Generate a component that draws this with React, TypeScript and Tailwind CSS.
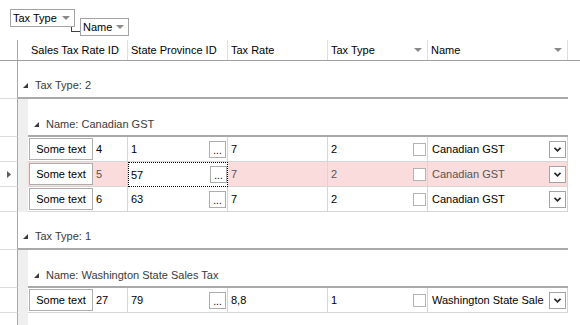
import type { ReactNode } from "react";

type Row = {
  id: string;
  province: string;
  rate: string;
  type: string;
  name: string;
  current?: boolean;
};

type Group = {
  taxType: string;
  name: string;
  rows: Row[];
};

const groups: Group[] = [
  {
    taxType: "2",
    name: "Canadian GST",
    rows: [
      { id: "4", province: "1", rate: "7", type: "2", name: "Canadian GST" },
      { id: "5", province: "57", rate: "7", type: "2", name: "Canadian GST", current: true },
      { id: "6", province: "63", rate: "7", type: "2", name: "Canadian GST" },
    ],
  },
  {
    taxType: "1",
    name: "Washington State Sales Tax",
    rows: [{ id: "27", province: "79", rate: "8,8", type: "1", name: "Washington State Sale" }],
  },
];

function FilterArrow() {
  return (
    <svg width="8" height="4" viewBox="0 0 8 4" className="shrink-0">
      <polygon points="0,0 8,0 4,4" fill="#8a8a8a" />
    </svg>
  );
}

function ExpandGlyph() {
  return (
    <svg width="5" height="5" viewBox="0 0 5 5" className="shrink-0">
      <polygon points="5,0 5,5 0,5" fill="#3a3a3a" />
    </svg>
  );
}

function GroupChip({ children, width }: { children: ReactNode; width: string }) {
  return (
    <div
      className={`flex h-[18px] items-center border border-[#a3a3a3] bg-white pl-[2px] pr-[4px] text-black ${width}`}
    >
      <span className="flex-1">{children}</span>
      <FilterArrow />
    </div>
  );
}

function Indicator({ children }: { children?: ReactNode }) {
  return (
    <div className="flex w-[18px] shrink-0 items-center justify-center border-r border-b border-r-[#a8a8a8] border-b-[#dcdcdc]">
      {children}
    </div>
  );
}

function Strip() {
  return <div className="w-[10px] shrink-0 bg-[#efefef]" />;
}

function DataRow({ row }: { row: Row }) {
  const bg = row.current ? "bg-[#fadcdc]" : "bg-white";
  const txt = row.current ? "text-[#555]" : "text-black";
  const cell = `flex h-full items-center border-r border-b border-[#d6d6d6] ${txt}`;
  return (
    <div className="flex h-[25px]">
      <Indicator>
        {row.current ? (
          <svg width="4" height="7" viewBox="0 0 4 7">
            <polygon points="0,0 4,3.5 0,7" fill="#5a5a5a" />
          </svg>
        ) : null}
      </Indicator>
      <Strip />
      <div className={`flex ${bg}`}>
        <div className={`${cell} w-[100px] pl-[1px]`}>
          <div className="flex h-[22px] w-[64px] items-center justify-center border border-[#adadad] bg-white text-black">
            Some text
          </div>
          <span className="ml-[3px]">{row.id}</span>
        </div>
        {row.current ? (
          <div className="flex h-full w-[100px] items-center border border-dotted border-black bg-white pl-[2px] text-black">
            <span className="flex-1">{row.province}</span>
            <div className="flex h-[17px] w-[17px] items-end justify-center border border-[#adadad] bg-white pb-[1px] text-[10px] leading-none text-black">
              ...
            </div>
          </div>
        ) : (
          <div className={`${cell} w-[100px] pl-[3px] pr-[1px]`}>
            <span className="flex-1">{row.province}</span>
            <div className="flex h-[17px] w-[17px] items-end justify-center border border-[#adadad] bg-white pb-[1px] text-[10px] leading-none text-black">
              ...
            </div>
          </div>
        )}
        <div className={`${cell} w-[100px] pl-[3px]`}>{row.rate}</div>
        <div className={`${cell} w-[100px] pl-[3px] pr-[1px]`}>
          <span className="flex-1">{row.type}</span>
          <div className="h-[13px] w-[13px] border border-[#b4b4b4] bg-white" />
        </div>
        <div className={`${cell} w-[140px] pl-[4px] pr-[1px]`}>
          <span className="flex-1 overflow-hidden whitespace-nowrap">{row.name}</span>
          <div className="flex h-[17px] w-[17px] items-center justify-center border border-[#a3a3a3] bg-white">
            <svg width="7" height="5" viewBox="0 0 7 5">
              <polyline points="0.5,0.8 3.5,3.8 6.5,0.8" fill="none" stroke="#222" strokeWidth="1.6" />
            </svg>
          </div>
        </div>
      </div>
    </div>
  );
}

function GroupBlock({ group }: { group: Group }) {
  return (
    <>
      <div className="flex h-[38px]">
        <Indicator />
        <div className="flex w-[550px] items-end border-b-2 border-[#a9a9a9] pb-[5px] pl-[5px] text-[#3a3a3a]">
          <div className="mb-[4px]">
            <ExpandGlyph />
          </div>
          <span className="ml-[7px]">Tax Type: {group.taxType}</span>
        </div>
      </div>
      <div className="flex h-[38px]">
        <Indicator />
        <Strip />
        <div className="flex w-[540px] items-end border-b-2 border-[#a9a9a9] pb-[4px] pl-[6px] text-[#3a3a3a]">
          <div className="mb-[4px]">
            <ExpandGlyph />
          </div>
          <span className="ml-[7px]">Name: {group.name}</span>
        </div>
      </div>
      {group.rows.map((r) => (
        <DataRow key={r.id} row={r} />
      ))}
    </>
  );
}

export default function App() {
  return (
    <div
      className="flex h-[325px] w-[580px] flex-col overflow-hidden bg-white text-[11px] leading-[14px] text-black"
      style={{ fontFamily: '"Liberation Sans", Arial, sans-serif' }}
    >
      {/* group-by panel */}
      <div className="flex h-[40px] shrink-0 items-start pl-[10px] pt-[9px]">
        <GroupChip width="w-[65px]">Tax Type</GroupChip>
        <div className="relative ml-[5px] mt-[9px]">
          <div className="absolute left-[-9px] top-[9px] h-[5px] w-[9px] border-b border-l border-[#404040]" />
          <GroupChip width="w-[49px]">Name</GroupChip>
        </div>
      </div>

      {/* header */}
      <div className="flex h-[21px] shrink-0 border-b border-[#a0a0a0]">
        <div className="w-[18px] shrink-0 border-r border-[#a8a8a8]" />
        <div className="flex w-[110px] items-center border-r border-[#dedede] pl-[13px]">Sales Tax Rate ID</div>
        <div className="flex w-[100px] items-center border-r border-[#dedede] pl-[3px]">State Province ID</div>
        <div className="flex w-[100px] items-center border-r border-[#dedede] pl-[3px]">Tax Rate</div>
        <div className="flex w-[100px] items-center border-r border-[#dedede] pl-[3px] pr-[5px]">
          <span className="flex-1">Tax Type</span>
          <FilterArrow />
        </div>
        <div className="flex w-[140px] items-center border-r border-[#dedede] pl-[3px] pr-[5px]">
          <span className="flex-1">Name</span>
          <FilterArrow />
        </div>
      </div>

      {groups.map((g) => (
        <GroupBlock key={g.taxType} group={g} />
      ))}

      {/* filler below last row */}
      <div className="flex flex-1">
        <div className="w-[18px] shrink-0 border-r border-[#a8a8a8]" />
        <Strip />
      </div>
    </div>
  );
}
